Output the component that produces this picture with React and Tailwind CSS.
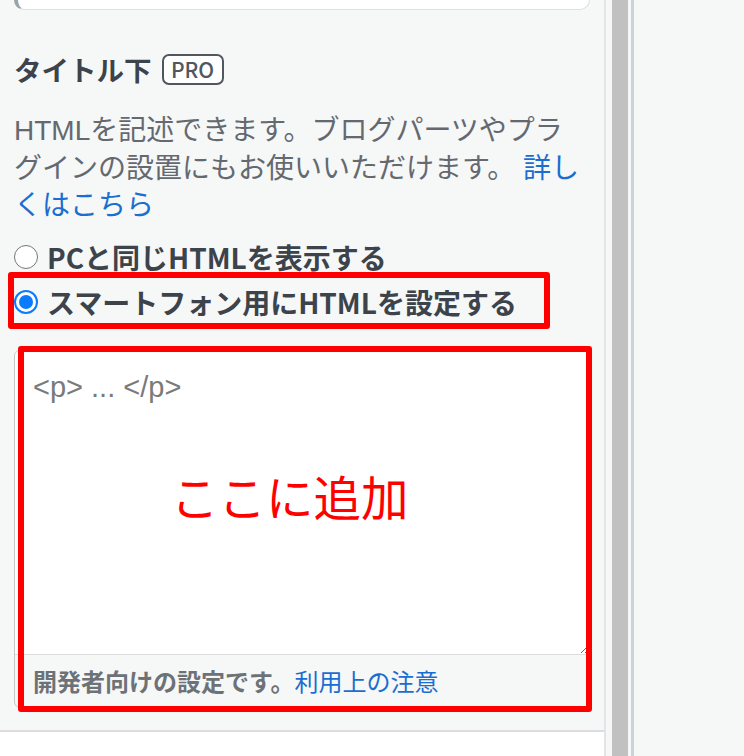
import { useState } from "react";

const jp = { fontFamily: '"Noto Sans CJK JP", "Noto Sans", sans-serif' };

function Radio({ checked }) {
  return checked ? (
    <span className="flex h-[24px] w-[24px] shrink-0 items-center justify-center rounded-full border-2 border-[#0a7aff] bg-white">
      <span className="h-[14px] w-[14px] rounded-full bg-[#0a7aff]" />
    </span>
  ) : (
    <span className="h-[24px] w-[24px] shrink-0 rounded-full border-[1.5px] border-[#767676] bg-white" />
  );
}

export default function App() {
  const [mode, setMode] = useState("sp");

  return (
    <div className="flex h-[756px] w-[744px] overflow-hidden bg-[#f6f7f7]" style={jp}>
      <div className="flex w-[606px] shrink-0 flex-col border-r-2 border-[#e2e4e7]">
        {/* bottom of the previous field */}
        <div className="mx-[14px] h-[10px] rounded-b-[10px] border border-t-0 border-l-[4px] border-[#dcdfe3] border-l-[#97a4aa] bg-white" />

        <div className="flex-1 px-[14px]">
          <div className="mt-[40px] flex items-center gap-[10px]">
            <h3 className="text-[27.5px] font-bold leading-[38px] text-[#3c434a]">タイトル下</h3>
            <span className="flex h-[31px] w-[62px] items-center justify-center rounded-[7px] border-2 border-[#50575e] bg-white text-[21px] font-medium leading-none text-[#50575e]">
              PRO
            </span>
          </div>

          <p className="mt-[24px] w-[572px] text-[28px] leading-[37.5px] text-[#646970]" style={{ fontFamily: '"Liberation Sans", "Noto Sans CJK JP", sans-serif' }}>
            HTMLを記述できます。ブログパーツやプラグインの設置にもお使いいただけます。{" "}
            <a className="text-[#1a6ecf]">詳しくはこちら</a>
          </p>

          <label className="mt-[14px] flex items-center gap-[9px] text-[28px] font-bold leading-[36px] text-[#3c434a]" onClick={() => setMode("pc")}>
            <Radio checked={mode === "pc"} />
            PCと同じHTMLを表示する
          </label>

          <div className="relative mt-[9px]">
            <label className="flex items-center gap-[9px] text-[28px] font-bold leading-[36px] text-[#3c434a]" onClick={() => setMode("sp")}>
              <Radio checked={mode === "sp"} />
              スマートフォン用にHTMLを設定する
            </label>
            <div className="pointer-events-none absolute left-[-6px] top-[-12px] h-[57px] w-[542px] rounded-[3px] border-[6px] border-[#ff0000]" />
          </div>

          <div className="relative mt-[30px]">
            <div className="overflow-hidden rounded-[6px] border border-[#c3c4c7]">
              <textarea
                readOnly
                placeholder="<p> ... </p>"
                className="block h-[304px] w-full resize-y border-b border-[#dcdcde] bg-white px-[18px] pt-[21px] text-[29px] leading-[30px] text-[#3c434a] outline-none placeholder:text-[#7a7a7a]"
                style={{ fontFamily: '"Liberation Sans", sans-serif' }}
              />
              <div className="flex h-[52px] items-center px-[18px] text-[24px] leading-[24px]">
                <span className="font-bold text-[#6d7277]">開発者向けの設定です。</span>
                <a className="text-[#1a6ecf]">利用上の注意</a>
              </div>
            </div>
            <div className="pointer-events-none absolute left-[4px] top-[-4px] h-[366px] w-[574px] rounded-[3px] border-[6px] border-[#ff0000]" />
            <div className="pointer-events-none absolute left-[157px] top-[120px] whitespace-nowrap text-[47.5px] leading-[52px] text-[#ff0000]">
              ここに追加
            </div>
          </div>
        </div>

        <div className="mt-[18px] h-[26px] border-t-2 border-[#dcdcde] bg-white" />
      </div>

      <div className="w-[6px] shrink-0" />
      <div className="w-[16px] shrink-0 bg-[#c1c1c1]" />
      <div className="w-[3px] shrink-0" />
      <div className="w-[3px] shrink-0 bg-[#c8d3da]" />
      <div className="flex-1" />
    </div>
  );
}
